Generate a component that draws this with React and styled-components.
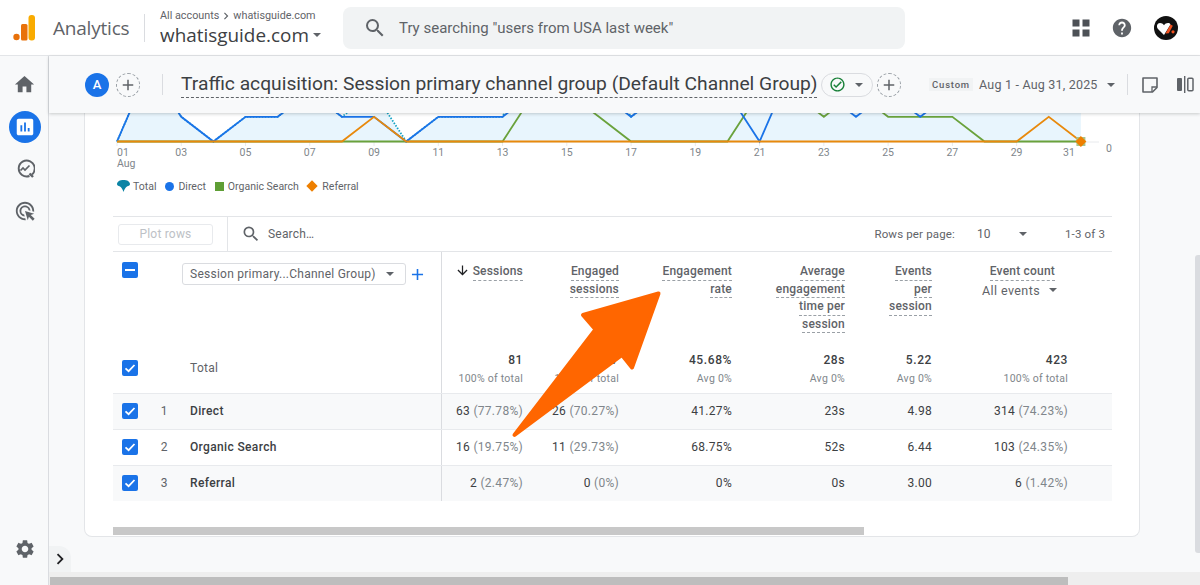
import React from 'react';
import styled, { createGlobalStyle } from 'styled-components';
import {
  MdHome,
  MdInsertChart,
  MdOutlineAdsClick,
  MdSettings,
  MdSearch,
  MdHelp,
  MdAdd,
  MdArrowDownward,
  MdChevronRight,
  MdOutlineCheckCircle,
} from 'react-icons/md';

const GlobalStyle = createGlobalStyle`
  html, body {
    margin: 0;
    padding: 0;
    height: 100%;
    overflow: hidden;
    background: #fff;
    font-family: Roboto, "Liberation Sans", sans-serif;
    color: #3c4043;
  }
  * { box-sizing: border-box; }
`;

const COLUMNS = '328px 82px 96px 113px 113px 87px 136px 44px';

const blue = [0, 3, 1, 0, 1, 1, 2, 1, 1, 0, 1, 1, 1, 2, 3, 2, 1, 2, 3, 2, 0, 3, 2, 1, 2, 1, 2, 2, 2, 2, 2];
const green = [0, 0, 0, 0, 0, 0, 0, 0, 0, 0, 0, 0, 0, 2, 2, 1, 0, 0, 0, 0, 2, 2, 1, 2, 1, 1, 1, 0, 0, 0, 0];
const orange = [0, 0, 0, 0, 0, 0, 0, 0, 1, 0, 0, 0, 0, 0, 0, 0, 0, 0, 0, 0, 0, 0, 0, 0, 0, 0, 0, 0, 0, 1, 0];
const total = blue.map((v, i) => v + green[i] + orange[i]);

const dayX = (i) => 4 + i * 32.13;
const valY = (v) => 28.5 - v * 24.7;
const toPoints = (list) => list.map((v, i) => `${dayX(i)},${valY(v)}`).join(' ');

const headers = [
  { lines: ['Sessions'], sorted: true },
  { lines: ['Engaged', 'sessions'] },
  { lines: ['Engagement', 'rate'] },
  { lines: ['Average', 'engagement', 'time per', 'session'] },
  { lines: ['Events', 'per', 'session'] },
  { lines: ['Event count'], events: true },
];

const totals = [
  ['81', '100% of total'],
  ['37', '100% of total'],
  ['45.68%', 'Avg 0%'],
  ['28s', 'Avg 0%'],
  ['5.22', 'Avg 0%'],
  ['423', '100% of total'],
];

const rows = [
  { n: 1, name: 'Direct', tinted: true, cells: [['63', '(77.78%)'], ['26', '(70.27%)'], ['41.27%'], ['23s'], ['4.98'], ['314', '(74.23%)']] },
  { n: 2, name: 'Organic Search', cells: [['16', '(19.75%)'], ['11', '(29.73%)'], ['68.75%'], ['52s'], ['6.44'], ['103', '(24.35%)']] },
  { n: 3, name: 'Referral', tinted: true, cells: [['2', '(2.47%)'], ['0', '(0%)'], ['0%'], ['0s'], ['3.00'], ['6', '(1.42%)']] },
];

const Logo = () => (
  <svg width="24" height="28" viewBox="0 0 24 28">
    <circle cx="4.5" cy="23" r="3.2" fill="#e8710a" />
    <rect x="9" y="10" width="6.5" height="16.5" rx="1.5" fill="#e8710a" />
    <rect x="16.5" y="1" width="6.5" height="25.5" rx="3" fill="#f9ab00" />
  </svg>
);

const AppsIcon = () => (
  <svg width="18" height="18" viewBox="0 0 18 18" fill="#4d5156">
    <rect x="0.5" y="0.5" width="7" height="7" />
    <rect x="10.5" y="0.5" width="7" height="7" />
    <rect x="0.5" y="10.5" width="7" height="7" />
    <rect x="10.5" y="10.5" width="7" height="7" />
  </svg>
);

const AvatarIcon = () => (
  <svg width="24" height="24" viewBox="0 0 24 24">
    <circle cx="12" cy="12" r="12" fill="#111" />
    <path d="M10 19 4 13c-2-2.400-.8-6 2-6 1.700 0 3 .9 4 2.300C11 7.900 12.300 7 14 7c1.200 0 2 .5 2.500 1.400L10 19z" fill="#fff" />
    <path d="M11.500 17.500 16.500 8.500l2.300 1.300-4 7.500z" fill="#f4511e" />
    <circle cx="19" cy="15.800" r="1.600" fill="#f4511e" />
  </svg>
);

const ExploreIcon = () => (
  <svg width="20" height="20" viewBox="0 0 20 20" fill="none" stroke="#5f6368" strokeWidth="1.900">
    <path d="M17 15.500A8 8 0 1 0 14.500 17" />
    <path d="M14.500 14.500 18 18" strokeWidth="2.400" />
    <path d="M5.500 11.500 8 9l2 2 4.500-4.500" strokeWidth="1.700" />
  </svg>
);

const NoteIcon = () => (
  <svg width="16" height="16" viewBox="0 0 16 16" fill="none" stroke="#5f6368" strokeWidth="1.600">
    <path d="M1 1h14v9.500L10.500 15H1z" strokeLinejoin="round" />
    <path d="M10 15v-5h5" strokeWidth="1.300" />
  </svg>
);

const CompareIcon = () => (
  <svg width="18" height="17" viewBox="0 0 18 17">
    <rect x="1" y="2" width="5" height="13" rx="1" fill="#5f6368" />
    <rect x="11.800" y="2.300" width="5.200" height="12.400" rx="1" fill="none" stroke="#5f6368" strokeWidth="1.500" />
    <rect x="8" y="0" width="1.400" height="17" fill="#5f6368" />
  </svg>
);

const DropIcon = () => (
  <svg width="13" height="12" viewBox="0 0 13 12">
    <path d="M0 4.200C0 1.500 3 0 6.500 0S13 1.500 13 4.200c0 1.300-1.700 1.700-3 2.300-1.300.7-2.500 2.700-3.500 5.500-1-2.800-2.200-4.800-3.500-5.500C1.700 5.900 0 5.500 0 4.200z" fill="#0b84a5" />
  </svg>
);

const CheckIcon = () => (
  <svg width="16" height="16" viewBox="0 0 16 16" fill="none">
    <path d="M3.500 8.300 6.600 11.200 12.500 5" stroke="#fff" strokeWidth="1.800" />
  </svg>
);

const TrafficChart = () => (
  <ChartSvg viewBox="0 0 1006 57" width="1006" height="57">
    <polygon points={`${dayX(0)},28.500 ${toPoints(total)} ${dayX(30)},28.500`} fill="#e8f5fd" />
    <line x1="4" y1="29" x2="986" y2="29" stroke="#e8eaed" strokeWidth="1" />
    {blue.map((_, i) =>
      i % 2 === 0 ? (
        <line key={i} x1={dayX(i)} y1="29" x2={dayX(i)} y2="33" stroke="#e8eaed" />
      ) : null
    )}
    <polyline points={toPoints(green)} fill="none" stroke="#6aa23c" strokeWidth="1.800" />
    <polyline points={toPoints(total)} fill="none" stroke="#12a3c4" strokeWidth="1.800" strokeDasharray="1.500 1.500" />
    <polyline points={toPoints(blue)} fill="none" stroke="#1a73e8" strokeWidth="1.800" />
    <polyline points={toPoints(orange)} fill="none" stroke="#e8890c" strokeWidth="1.800" />
    <rect x={dayX(30) - 4.5} y="24" width="9" height="9" fill="#a9c48c" />
    <polygon
      points={`${dayX(30)},23 ${dayX(30) + 5.5},28.500 ${dayX(30)},34 ${dayX(30) - 5.5},28.500`}
      fill="#ee7f00"
    />
    {blue.map((_, i) => {
      if (i % 2 !== 0) return null;
      const label = String(i + 1).padStart(2, '0');
      if (i === 0) {
        return (
          <AxisText key={i} x="4" y="42.500">
            {label}
          </AxisText>
        );
      }
      return (
        <AxisText key={i} x={i === 30 ? dayX(i) - 6 : dayX(i)} y="42.500" textAnchor={i === 30 ? 'end' : 'middle'}>
          {label}
        </AxisText>
      );
    })}
    <AxisText x="4" y="53.500">
      Aug
    </AxisText>
    <AxisText x="993" y="38.500">
      0
    </AxisText>
  </ChartSvg>
);

const App = () => (
  <>
    <GlobalStyle />
    <Page>
      <Header>
        <LogoWrap>
          <Logo />
        </LogoWrap>
        <ProductName>Analytics</ProductName>
        <HeaderDivider />
        <AccountBlock>
          <Breadcrumb>
            All accounts <MdChevronRight size={14} /> whatisguide.com
          </Breadcrumb>
          <AccountName>
            whatisguide.com
            <Caret $color="#5f6368" $left={4} />
          </AccountName>
        </AccountBlock>
        <SearchBox>
          <MdSearch size={24} color="#5f6368" />
          <SearchHint>Try searching "users from USA last week"</SearchHint>
        </SearchBox>
        <HeaderActions>
          <AppsIcon />
          <MdHelp size={22} color="#5f6368" />
          <AvatarIcon />
        </HeaderActions>
      </Header>
      <Body>
        <Sidebar>
          <NavItem>
            <MdHome size={23} />
          </NavItem>
          <NavItem $active>
            <MdInsertChart size={22} />
          </NavItem>
          <NavItem>
            <ExploreIcon />
          </NavItem>
          <NavItem>
            <MdOutlineAdsClick size={22} />
          </NavItem>
          <NavItem $bottom>
            <MdSettings size={22} />
          </NavItem>
        </Sidebar>
        <Main>
          <TitleBar>
            <ComparisonBadge>A</ComparisonBadge>
            <DashedAdd>
              <MdAdd size={18} />
            </DashedAdd>
            <TitleDivider />
            <ReportTitle>Traffic acquisition: Session primary channel group (Default Channel Group)</ReportTitle>
            <StatusPill>
              <MdOutlineCheckCircle size={17} color="#188038" />
              <Caret $color="#5f6368" $left={9} />
            </StatusPill>
            <DashedAdd $left={4}>
              <MdAdd size={18} />
            </DashedAdd>
            <DateGroup>
              <CustomTag>Custom</CustomTag>
              <DateText>Aug 1 - Aug 31, 2025</DateText>
              <Caret $color="#5f6368" $left={11} />
            </DateGroup>
            <BarDivider />
            <NoteIcon />
            <CompareWrap>
              <CompareIcon />
            </CompareWrap>
          </TitleBar>
          <Scroller>
            <Card>
              <TrafficChart />
              <Legend>
                <LegendItem $gap={3}>
                  <DropIcon />
                  Total
                </LegendItem>
                <LegendItem>
                  <Dot />
                  Direct
                </LegendItem>
                <LegendItem>
                  <SquareMark />
                  Organic Search
                </LegendItem>
                <LegendItem>
                  <DiamondMark />
                  Referral
                </LegendItem>
              </Legend>
              <Table>
                <Toolbar>
                  <PlotCell>
                    <PlotButton>Plot rows</PlotButton>
                  </PlotCell>
                  <SearchCell>
                    <MdSearch size={20} color="#5f6368" />
                    <span>Search…</span>
                  </SearchCell>
                  <Pager>
                    <PagerLabel>Rows per page:</PagerLabel>
                    <PagerValue>10</PagerValue>
                    <Caret $color="#5f6368" />
                    <PagerRange>1-3 of 3</PagerRange>
                  </Pager>
                </Toolbar>
                <HeaderRow>
                  <DimensionHead>
                    <CheckBox>
                      <MinusBar />
                    </CheckBox>
                    <DimensionPick>
                      <span>Session primary...Channel Group)</span>
                      <Caret $color="#5f6368" />
                    </DimensionPick>
                    <MdAdd size={19} color="#1a73e8" />
                  </DimensionHead>
                  {headers.map((h, i) => (
                    <MetricHead key={h.lines[0]} $first={i === 0} $inset={h.events ? 13 : 0}>
                      {h.sorted ? (
                        <SortLine>
                          <MdArrowDownward size={15} color="#202124" />
                          <HeadLine>{h.lines[0]}</HeadLine>
                        </SortLine>
                      ) : (
                        h.lines.map((l) => <HeadLine key={l}>{l}</HeadLine>)
                      )}
                      {h.events ? (
                        <EventPick>
                          All events
                          <Caret $color="#5f6368" $left={9} />
                        </EventPick>
                      ) : null}
                    </MetricHead>
                  ))}
                  <span />
                </HeaderRow>
                <TotalRow>
                  <NameCell $lift={10}>
                    <CheckBox>
                      <CheckIcon />
                    </CheckBox>
                    <span />
                    <TotalLabel>Total</TotalLabel>
                  </NameCell>
                  {totals.map(([main, sub], i) => (
                    <TotalCell key={i} $first={i === 0}>
                      <strong>{main}</strong>
                      <small>{sub}</small>
                    </TotalCell>
                  ))}
                  <span />
                </TotalRow>
                {rows.map((r) => (
                  <DataRow key={r.n} $tinted={r.tinted}>
                    <NameCell $lift={2}>
                      <CheckBox>
                        <CheckIcon />
                      </CheckBox>
                      <RowNumber>{r.n}</RowNumber>
                      <RowName>{r.name}</RowName>
                    </NameCell>
                    {r.cells.map(([main, share], i) => (
                      <ValueCell key={i} $first={i === 0}>
                        {main}
                        {share ? <Share> {share}</Share> : null}
                      </ValueCell>
                    ))}
                    <span />
                  </DataRow>
                ))}
              </Table>
              <InnerScroll>
                <InnerThumb />
              </InnerScroll>
            </Card>
            <SideToggle>
              <MdChevronRight size={22} color="#202124" />
            </SideToggle>
            <VerticalThumb />
          </Scroller>
          <BottomTrack>
            <BottomThumb />
          </BottomTrack>
        </Main>
      </Body>
      <PointerArrow viewBox="0 0 1200 585" width="1200" height="585">
        <polygon
          points="658.500,293.500 583,315 595.500,329.500 514.500,435 622,355 632,367.500"
          fill="#ff6600"
          stroke="#ff6600"
          strokeWidth="4"
          strokeLinejoin="round"
        />
      </PointerArrow>
    </Page>
  </>
);

export default App;

const Page = styled.div`
  position: relative;
  display: flex;
  flex-direction: column;
  width: 1200px;
  height: 585px;
  overflow: hidden;
`;

const Header = styled.header`
  display: flex;
  align-items: center;
  flex: 0 0 56px;
  padding-left: 12px;
  background: #fff;
  border-bottom: 1px solid #e3e5e8;
`;

const LogoWrap = styled.div`
  display: flex;
  width: 41px;
`;

const ProductName = styled.div`
  width: 91px;
  font-family: "Open Sans", sans-serif;
  font-size: 19px;
  color: #5f6368;
  letter-spacing: -0.2px;
`;

const HeaderDivider = styled.div`
  width: 1px;
  height: 28px;
  background: #dadce0;
  margin-right: 15px;
`;

const AccountBlock = styled.div`
  display: flex;
  flex-direction: column;
  width: 183px;
`;

const Breadcrumb = styled.div`
  display: flex;
  align-items: center;
  height: 14px;
  margin-top: 1px;
  font-size: 10.8px;
  color: #5f6368;
`;

const AccountName = styled.div`
  display: flex;
  align-items: center;
  height: 25px;
  font-family: "Open Sans", sans-serif;
  font-size: 18.9px;
  color: #3c4043;
`;

const Caret = styled.i`
  display: inline-block;
  flex-shrink: 0;
  width: 0;
  height: 0;
  margin-left: ${(props) => props.$left || 0}px;
  border-left: 4px solid transparent;
  border-right: 4px solid transparent;
  border-top: 4px solid ${(props) => props.$color};
`;

const SearchBox = styled.div`
  display: flex;
  align-items: center;
  gap: 12px;
  width: 562px;
  height: 42px;
  padding-left: 20px;
  background: #f1f3f4;
  border-radius: 8px;
`;

const SearchHint = styled.span`
  font-size: 15px;
  color: #5f6368;
`;

const HeaderActions = styled.div`
  display: flex;
  align-items: center;
  gap: 21px;
  margin-left: 167px;
`;

const Body = styled.div`
  display: flex;
  flex: 1;
  min-height: 0;
`;

const Sidebar = styled.nav`
  display: flex;
  flex-direction: column;
  align-items: center;
  flex: 0 0 49px;
  padding: 7px 0 15px 1px;
  background: #f8f9fa;
  border-right: 1px solid #dadce0;
`;

const NavItem = styled.div`
  display: flex;
  align-items: center;
  justify-content: center;
  width: 32px;
  height: 32px;
  margin: 5.2px 0;
  margin-top: ${(props) => (props.$bottom ? 'auto' : '5.2px')};
  border-radius: 50%;
  color: ${(props) => (props.$active ? '#fff' : '#5f6368')};
  background: ${(props) => (props.$active ? '#1a73e8' : 'transparent')};
`;

const Main = styled.main`
  display: flex;
  flex-direction: column;
  flex: 1;
  min-width: 0;
  background: #f8f9fa;
`;

const TitleBar = styled.div`
  position: relative;
  z-index: 2;
  display: flex;
  align-items: center;
  flex: 0 0 57px;
  padding-left: 36px;
  background: #f8f9fa;
  box-shadow: 0 1px 3px rgba(60, 64, 67, 0.25);

  > * {
    flex-shrink: 0;
  }
`;

const ComparisonBadge = styled.div`
  display: flex;
  align-items: center;
  justify-content: center;
  width: 24px;
  height: 24px;
  border-radius: 50%;
  background: #1a73e8;
  color: #fff;
  font-size: 13px;
  font-weight: 500;
`;

const DashedAdd = styled.div`
  display: flex;
  align-items: center;
  justify-content: center;
  width: 24px;
  height: 24px;
  margin-left: ${(props) => props.$left ?? 7}px;
  border: 1px dashed #9aa0a6;
  border-radius: 50%;
  color: #5f6368;
`;

const TitleDivider = styled.div`
  width: 1px;
  height: 21px;
  margin: 0 18px 0 22px;
  background: #dadce0;
`;

const ReportTitle = styled.h1`
  margin: 0;
  width: 636px;
  font-family: Roboto, sans-serif;
  font-size: 19.24px;
  font-weight: 400;
  line-height: 26px;
  white-space: nowrap;
  color: #3c4043;
  border-bottom: 1px dashed #5f6368;
`;

const StatusPill = styled.div`
  display: flex;
  align-items: center;
  width: 52px;
  height: 24px;
  margin-left: 4px;
  padding-left: 7px;
  border: 1px solid #dadce0;
  border-radius: 12px;
`;

const DateGroup = styled.div`
  display: flex;
  align-items: center;
  margin-left: 28px;
  white-space: nowrap;
`;

const CustomTag = styled.span`
  width: 44px;
  padding: 1px 0;
  background: #f1f3f4;
  font-size: 9.5px;
  font-weight: 500;
  letter-spacing: 0.8px;
  text-align: center;
  color: #5f6368;
`;

const DateText = styled.span`
  width: 117px;
  margin-left: 6px;
  font-size: 12.5px;
  letter-spacing: 0.2px;
  color: #5f6368;
`;

const BarDivider = styled.div`
  width: 1px;
  height: 21px;
  margin: 0 14px 0 12px;
  background: #dadce0;
`;

const CompareWrap = styled.div`
  display: flex;
  margin-left: 18px;
`;

const Scroller = styled.div`
  position: relative;
  flex: 1;
  min-height: 0;
  overflow: hidden;
`;

const Card = styled.section`
  width: 1056px;
  height: 424px;
  margin-left: 35px;
  padding: 0 0 1px 28px;
  background: #fff;
  border: 1px solid #e3e5e8;
  border-top: none;
  border-radius: 0 0 8px 8px;
`;

const ChartSvg = styled.svg`
  display: block;
  overflow: hidden;
`;

const AxisText = styled.text`
  font-family: Roboto, sans-serif;
  font-size: 10.5px;
  fill: #80868b;
`;

const Legend = styled.div`
  display: flex;
  align-items: center;
  gap: 9px;
  height: 16px;
  margin-top: 8px;
  padding-left: 4px;
`;

const LegendItem = styled.div`
  display: flex;
  align-items: center;
  gap: ${(props) => props.$gap ?? 4}px;
  font-size: 10.5px;
  color: #5f6368;
`;

const Dot = styled.i`
  width: 9px;
  height: 9px;
  border-radius: 50%;
  background: #1a73e8;
`;

const SquareMark = styled.i`
  width: 9px;
  height: 9px;
  background: #5f9e35;
`;

const DiamondMark = styled.i`
  width: 8px;
  height: 8px;
  margin-right: 2.5px;
  background: #ee7f00;
  transform: rotate(45deg);
`;

const Table = styled.div`
  width: 999px;
  margin-top: 22px;
  border-top: 1px solid #e3e5e8;
`;

const Toolbar = styled.div`
  display: flex;
  align-items: center;
  height: 35px;
  border-bottom: 1px solid #e3e5e8;
`;

const PlotCell = styled.div`
  display: flex;
  align-items: center;
  width: 115px;
  height: 100%;
  padding-left: 5px;
  border-right: 1px solid #e3e5e8;
`;

const PlotButton = styled.div`
  width: 95px;
  height: 21px;
  border: 1px solid #e8eaed;
  border-radius: 3px;
  font-size: 12px;
  letter-spacing: 0.2px;
  line-height: 19px;
  text-align: center;
  color: #bdc1c6;
`;

const SearchCell = styled.div`
  display: flex;
  align-items: center;
  gap: 7px;
  padding-left: 13px;
  font-size: 12px;
  letter-spacing: 0.2px;
  color: #5f6368;
`;

const Pager = styled.div`
  display: flex;
  align-items: center;
  margin-left: auto;
  padding-right: 7px;
  font-size: 11.5px;
  letter-spacing: 0.15px;
  color: #5f6368;
`;

const PagerLabel = styled.span`
  margin-right: 22px;
`;

const PagerValue = styled.span`
  width: 42px;
  font-size: 12px;
`;

const PagerRange = styled.span`
  margin-left: 38px;
`;

const HeaderRow = styled.div`
  display: grid;
  grid-template-columns: ${COLUMNS};
  height: 101px;
`;

const DimensionHead = styled.div`
  display: flex;
  align-items: flex-start;
  padding: 10px 0 0 9px;

  > svg {
    margin: 3px 0 0 2px;
  }
`;

const CheckBox = styled.div`
  display: flex;
  align-items: center;
  justify-content: center;
  flex: 0 0 16px;
  width: 16px;
  height: 16px;
  border-radius: 2px;
  background: #1a73e8;
`;

const MinusBar = styled.i`
  width: 10px;
  height: 2px;
  background: #fff;
`;

const DimensionPick = styled.div`
  display: flex;
  align-items: center;
  justify-content: space-between;
  width: 224px;
  height: 22px;
  margin: 1px 0 0 44px;
  padding: 0 11px 0 7px;
  border: 1px solid #dadce0;
  border-radius: 3px;
  font-size: 12px;
  letter-spacing: 0.25px;
  color: #5f6368;
`;

const MetricHead = styled.div`
  display: flex;
  flex-direction: column;
  align-items: flex-end;
  padding: 11px ${(props) => props.$inset}px 0 0;
  border-left: ${(props) => (props.$first ? '1px solid #dadce0' : 'none')};
`;

const SortLine = styled.div`
  display: flex;
  align-items: flex-start;
  gap: 3px;
`;

const HeadLine = styled.div`
  height: 17.5px;
  font-size: 12px;
  font-weight: 500;
  letter-spacing: 0.2px;
  line-height: 17px;
  white-space: nowrap;
  color: #5f6368;
  border-bottom: 1px dashed #9aa0a6;
`;

const EventPick = styled.div`
  display: flex;
  align-items: center;
  margin: 2px -2px 0 0;
  font-size: 12.5px;
  letter-spacing: 0.4px;
  color: #5f6368;
`;

const TotalRow = styled.div`
  display: grid;
  grid-template-columns: ${COLUMNS};
  height: 41px;
  border-bottom: 1px solid #e8eaed;
`;

const NameCell = styled.div`
  display: grid;
  grid-template-columns: 16px 52px 1fr;
  align-items: center;
  padding: 0 0 ${(props) => props.$lift}px 9px;
`;

const TotalLabel = styled.span`
  font-size: 12px;
  letter-spacing: 0.3px;
  color: #5f6368;
`;

const TotalCell = styled.div`
  display: flex;
  flex-direction: column;
  align-items: flex-end;
  border-left: ${(props) => (props.$first ? '1px solid #dadce0' : 'none')};

  strong {
    height: 18px;
    font-size: 12px;
    font-weight: 500;
    letter-spacing: 0.6px;
    line-height: 15px;
    color: #3c4043;
  }

  small {
    font-size: 10.5px;
    letter-spacing: 0.25px;
    line-height: 16px;
    color: #80868b;
  }
`;

const DataRow = styled.div`
  display: grid;
  grid-template-columns: ${COLUMNS};
  align-items: stretch;
  height: 36px;
  background: ${(props) => (props.$tinted ? '#f8f9fa' : '#fff')};
  border-bottom: 1px solid #e8eaed;

  &:last-child {
    height: 35px;
    border-bottom: none;
  }
`;

const RowNumber = styled.span`
  font-size: 12px;
  text-align: center;
  color: #5f6368;
`;

const RowName = styled.span`
  font-size: 12px;
  font-weight: 500;
  letter-spacing: 0.35px;
  color: #3c4043;
`;

const ValueCell = styled.div`
  display: flex;
  align-items: center;
  justify-content: flex-end;
  padding-bottom: 2px;
  white-space: pre;
  font-size: 12px;
  letter-spacing: 0.3px;
  color: #3c4043;
  border-left: ${(props) => (props.$first ? '1px solid #dadce0' : 'none')};
`;

const Share = styled.span`
  color: #80868b;
`;

const InnerScroll = styled.div`
  width: 999px;
  height: 8px;
  margin-top: 26px;
`;

const InnerThumb = styled.div`
  width: 751px;
  height: 100%;
  background: #c8c8c8;
`;

const SideToggle = styled.div`
  position: absolute;
  left: 0;
  bottom: 0;
  display: flex;
  align-items: center;
  justify-content: center;
  width: 22px;
  height: 26px;
  background: #f1f3f4;
  border-radius: 0 12px 0 0;
`;

const VerticalThumb = styled.div`
  position: absolute;
  right: 0;
  top: 142px;
  width: 5px;
  height: 298px;
  background: #dadce0;
  border-radius: 3px 0 0 3px;
`;

const BottomTrack = styled.div`
  flex: 0 0 13px;
  padding: 5px 0 0 1px;
  background: #eeeeee;
`;

const BottomThumb = styled.div`
  width: 1018px;
  height: 8px;
  background: #bdbdbd;
`;

const PointerArrow = styled.svg`
  position: absolute;
  left: 0;
  top: 0;
  z-index: 3;
  pointer-events: none;
`;
